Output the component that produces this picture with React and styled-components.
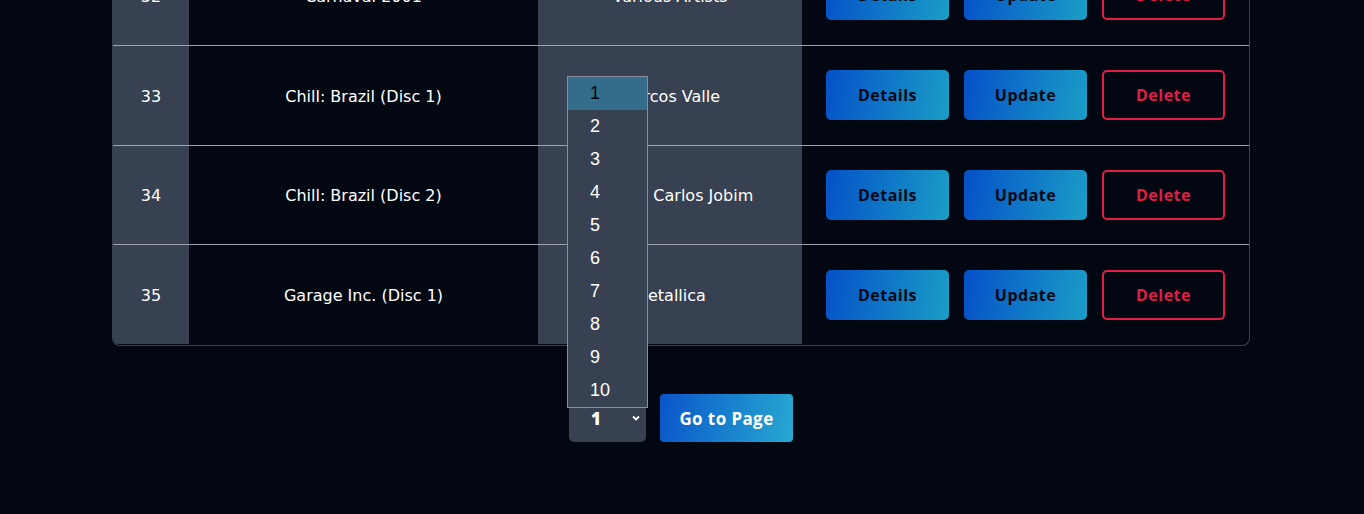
import React from "react";
import styled, { createGlobalStyle } from "styled-components";

const GlobalStyle = createGlobalStyle`
  html, body {
    margin: 0;
    padding: 0;
    background: #030712;
    overflow: hidden;
  }
  body {
    font-family: "DejaVu Sans", "Noto Sans", sans-serif;
    color: #ffffff;
  }
`;

const rows = [
  { id: 32, title: "Carnaval 2001", artist: "Various Artists" },
  { id: 33, title: "Chill: Brazil (Disc 1)", artist: "Marcos Valle" },
  { id: 34, title: "Chill: Brazil (Disc 2)", artist: "Antônio Carlos Jobim" },
  { id: 35, title: "Garage Inc. (Disc 1)", artist: "Metallica" },
];

const pages = [1, 2, 3, 4, 5, 6, 7, 8, 9, 10];

const Page = styled.div`
  width: 1138px;
  margin: -54px 0 0 112px;
  padding-bottom: 73px;
`;

const Table = styled.div`
  border: 1px solid #374151;
  border-top: none;
  border-radius: 0 0 8px 8px;
  overflow: hidden;
`;

const Row = styled.div`
  display: grid;
  grid-template-columns: 76px 349px 264px 1fr;
  height: 98.8px;
  border-bottom: 1px solid ${(p) => (p.last ? "transparent" : "#9ca3af")};
`;

const Cell = styled.div`
  display: flex;
  align-items: center;
  justify-content: center;
  padding-top: 2px;
  font-size: 16px;
  background: ${(p) => (p.shaded ? "#374151" : "transparent")};
  color: #ffffff;
`;

const Actions = styled.div`
  display: flex;
  align-items: center;
  justify-content: center;
  gap: 15px;
`;

const ActionButton = styled.button`
  width: 123px;
  height: 50px;
  border-radius: 5px;
  font-family: "Open Sans", sans-serif;
  font-size: 16px;
  letter-spacing: 0.5px;
  font-weight: 700;
  cursor: pointer;
  border: ${(p) => (p.danger ? "2px solid #e11d48" : "none")};
  background: ${(p) =>
    p.danger ? "transparent" : "linear-gradient(100deg, #0550c8 0%, #1a9ec6 100%)"};
  color: ${(p) => (p.danger ? "#e11d48" : "#030712")};
`;

const Pager = styled.div`
  display: flex;
  justify-content: center;
  gap: 14px;
  margin-top: 48px;
`;

const SelectWrap = styled.div`
  position: relative;
`;

const SelectBox = styled.div`
  width: 77px;
  height: 48px;
  box-sizing: border-box;
  background: #374151;
  border-radius: 5px;
  display: flex;
  align-items: center;
  justify-content: space-between;
  padding: 0 5px 0 22px;
  font-family: "Open Sans", sans-serif;
  font-size: 17px;
  font-weight: 800;
`;

const Popup = styled.ul`
  position: absolute;
  left: -2px;
  top: -318px;
  width: 81px;
  margin: 0;
  padding: 0;
  list-style: none;
  box-sizing: border-box;
  border: 1px solid #8a8f98;
  background: #374151;
  font-family: "Liberation Sans", Arial, sans-serif;
  font-size: 18px;
`;

const Option = styled.li`
  height: 33px;
  line-height: 33px;
  padding-left: 22px;
  background: ${(p) => (p.active ? "#346c8b" : "transparent")};
  color: ${(p) => (p.active ? "#030712" : "#ffffff")};
`;

const GoButton = styled.button`
  width: 133px;
  height: 48px;
  border: none;
  border-radius: 4px;
  background: linear-gradient(100deg, #0a55c9 0%, #26a9d1 100%);
  color: #ffffff;
  font-family: "Open Sans", sans-serif;
  font-size: 17px;
  letter-spacing: 0.4px;
  font-weight: 700;
`;

function Chevron() {
  return (
    <svg width="10" height="10" viewBox="0 0 10 10">
      <path d="M2 3.5 L5 6.5 L8 3.5" fill="none" stroke="#ffffff" strokeWidth="1.8" />
    </svg>
  );
}

export default function App() {
  return (
    <>
      <GlobalStyle />
      <Page>
        <Table>
          {rows.map((r, i) => (
            <Row key={r.id} last={i === rows.length - 1}>
              <Cell shaded>{r.id}</Cell>
              <Cell>{r.title}</Cell>
              <Cell shaded>{r.artist}</Cell>
              <Actions>
                <ActionButton>Details</ActionButton>
                <ActionButton>Update</ActionButton>
                <ActionButton danger>Delete</ActionButton>
              </Actions>
            </Row>
          ))}
        </Table>
        <Pager>
          <SelectWrap>
            <SelectBox>
              <span>1</span>
              <Chevron />
            </SelectBox>
            <Popup>
              {pages.map((n) => (
                <Option key={n} active={n === 1}>
                  {n}
                </Option>
              ))}
            </Popup>
          </SelectWrap>
          <GoButton>Go to Page</GoButton>
        </Pager>
      </Page>
    </>
  );
}
